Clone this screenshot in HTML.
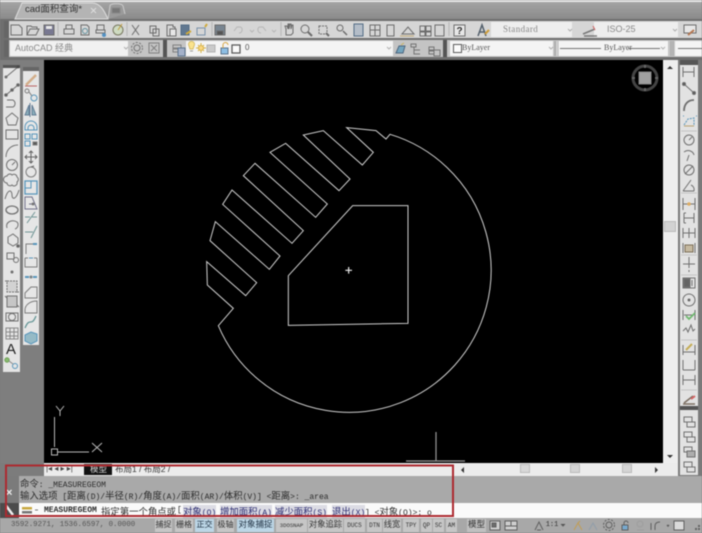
<!DOCTYPE html>
<html><head><meta charset="utf-8"><style>
html,body{margin:0;padding:0;width:702px;height:533px;overflow:hidden;background:#7c7c7c}
#r{position:absolute;left:0;top:0;width:702px;height:533px;overflow:hidden;filter:blur(.5px);background:#7c7c7c;font-family:"Liberation Sans","Noto Sans CJK SC",sans-serif}
.b{position:absolute}
.t{position:absolute;white-space:pre;line-height:12px;color:#333}
.m{font-family:"Liberation Mono","Noto Sans CJK SC",monospace;font-size:8px;color:#2c2c2c}
.m i{font-style:normal;font-size:9.4px;font-family:"Noto Sans CJK SC",sans-serif}
.s{font-family:"Liberation Mono","Noto Sans CJK SC",monospace;font-size:7px;color:#333;line-height:13px;top:519px;height:13px;text-align:center}
.k{background:#dcdce4;color:#2a2a70}
svg{position:absolute;left:0;top:0}
.ic{opacity:.72}
</style></head><body><div id="r">
<!-- chrome -->
<div class="b" style="left:0;top:0;width:702px;height:2px;background:#e8e8e8"></div>
<div class="b" style="left:0;top:2px;width:702px;height:17px;background:linear-gradient(#a4a4a4,#8a8a8a)"></div>
<div class="b" style="left:0;top:19px;width:702px;height:41px;background:#6f6f6f"></div>
<div class="b" style="left:4px;top:21px;width:698px;height:17px;background:#d6d6d6"></div>
<div class="b" style="left:4px;top:40px;width:698px;height:17px;background:#c4c4c4"></div>
<div class="b" style="left:10px;top:41px;width:118px;height:15px;background:#f1f1f1"></div>
<div class="b" style="left:186px;top:41px;width:207px;height:15px;background:#f4f4f4"></div>
<div class="b" style="left:450px;top:41px;width:103px;height:15px;background:#f4f4f4"></div>
<div class="b" style="left:557px;top:41px;width:111px;height:15px;background:#f4f4f4"></div>
<div class="b" style="left:675px;top:41px;width:27px;height:15px;background:#f4f4f4"></div>
<div class="b" style="left:491px;top:22px;width:81px;height:15px;background:#eee"></div>
<div class="b" style="left:594px;top:22px;width:84px;height:15px;background:#eee"></div>
<div class="b" style="left:163px;top:40px;width:4px;height:17px;background:#555"></div>
<div class="b" style="left:443px;top:40px;width:4px;height:17px;background:#555"></div>
<div class="b" style="left:4px;top:21px;width:5px;height:17px;background:#666"></div>
<div class="b" style="left:4px;top:40px;width:5px;height:17px;background:#666"></div>
<!-- canvas -->
<div class="b" style="left:44px;top:60px;width:619px;height:403px;background:#000"></div>
<!-- side panels -->
<div class="b" style="left:0;top:60px;width:44px;height:403px;background:#7e7e7e"></div>
<div class="b" style="left:3px;top:65px;width:17px;height:307px;background:#e4e4e4"></div>
<div class="b" style="left:3px;top:65px;width:17px;height:3px;background:#555"></div>
<div class="b" style="left:23px;top:67px;width:16px;height:278px;background:#e6e6e6"></div>
<div class="b" style="left:23px;top:67px;width:16px;height:4px;background:#666"></div>
<div class="b" style="left:663px;top:60px;width:15px;height:403px;background:#eee"></div>
<div class="b" style="left:678px;top:60px;width:24px;height:420px;background:#7a7a7a"></div>
<div class="b" style="left:680px;top:64px;width:18px;height:342px;background:#e2e2e2"></div>
<div class="b" style="left:680px;top:60px;width:18px;height:5px;background:#555"></div>
<div class="b" style="left:680px;top:409px;width:18px;height:66px;background:#e2e2e2"></div>
<div class="b" style="left:680px;top:406px;width:18px;height:4px;background:#555"></div>
<div class="b" style="left:664px;top:221px;width:12px;height:11px;background:#d2d2d2;border:1px solid #bbb;box-sizing:border-box"></div>
<!-- tab row & scrollbar -->
<div class="b" style="left:44px;top:463px;width:634px;height:13px;background:#ececec"></div>
<div class="b" style="left:520px;top:464px;width:10px;height:9px;background:#d8d8d8;border:1px solid #bbb;box-sizing:border-box"></div>
<div class="b" style="left:570px;top:464px;width:10px;height:9px;background:#d4d4d4;border:1px solid #bbb;box-sizing:border-box"></div>
<div class="b" style="left:622px;top:464px;width:10px;height:9px;background:#d4d4d4;border:1px solid #bbb;box-sizing:border-box"></div>
<div class="b" style="left:84px;top:464px;width:28px;height:11px;background:#111"></div>
<div class="t" style="left:46px;top:463px;font-size:8px;color:#444">|◂ ◂ ▸ ▸|</div>
<div class="t" style="left:90px;top:463px;font-size:8.5px;color:#ddd">模型</div>
<div class="t" style="left:115px;top:463px;font-size:8.5px;color:#333">布局1 / 布局2 /</div>
<!-- command area -->
<div class="b" style="left:0;top:476px;width:702px;height:27px;background:#a9a9a9"></div>
<div class="b" style="left:0;top:476px;width:19px;height:27px;background:#7b7b7b"></div>
<div class="b" style="left:0;top:503px;width:19px;height:15px;background:#4c4c4c"></div>
<div class="b" style="left:19px;top:503px;width:683px;height:15px;background:#fafafa"></div>
<div class="t" style="left:6px;top:487px;font-size:11px;font-weight:bold;color:#eee">×</div>
<div class="t m" style="left:20px;top:477px"><i>命令</i>: _MEASUREGEOM</div>
<div class="t m" style="left:20px;top:489px"><i>输入选项</i> [<i>距离</i>(D)/<i>半径</i>(R)/<i>角度</i>(A)/<i>面积</i>(AR)/<i>体积</i>(V)] &lt;<i>距离</i>&gt;: _area</div>
<div class="t m" style="left:44px;top:505px;font-weight:bold">MEASUREGEOM</div>
<div class="t m" style="left:101px;top:505px"><i>指定第一个角点或</i></div>
<div class="t m" style="left:177px;top:505px">[</div>
<div class="t m k" style="left:183px;top:505px"><i>对象</i>(O)</div>
<div class="t m k" style="left:220px;top:505px"><i>增加面积</i>(A)</div>
<div class="t m k" style="left:275px;top:505px"><i>减少面积</i>(S)</div>
<div class="t m k" style="left:332px;top:505px"><i>退出</i>(X)</div>
<div class="t m" style="left:365px;top:505px">] &lt;<i>对象</i>(O)&gt;: o</div>
<!-- status bar -->
<div class="b" style="left:0;top:518px;width:702px;height:15px;background:#a8a8a8"></div>
<div class="t s" style="left:11px;width:118px;color:#555;text-align:left;font-size:7.4px">3592.9271, 1536.6597, 0.0000</div>
<div class="t s" style="left:155px;width:17px;font-size:8px;background:#c6c6c6">捕捉</div>
<div class="t s" style="left:175px;width:18px;font-size:8px;background:#c6c6c6">栅格</div>
<div class="t s" style="left:195px;width:19px;font-size:8px;background:#bcd6e6;color:#234">正交</div>
<div class="t s" style="left:217px;width:17px;font-size:8px;background:#c6c6c6">极轴</div>
<div class="t s" style="left:237px;width:37px;font-size:8.5px;background:#bcd6e6;color:#234">对象捕捉</div>
<div class="t s" style="left:276px;width:31px;font-size:5.6px;background:#c6c6c6">3DOSNAP</div>
<div class="t s" style="left:308px;width:35px;font-size:8.3px;background:#c6c6c6">对象追踪</div>
<div class="t s" style="left:344px;width:21px;font-size:6px;background:#c6c6c6">DUCS</div>
<div class="t s" style="left:367px;width:15px;font-size:6px;background:#c6c6c6">DTN</div>
<div class="t s" style="left:383px;width:18px;font-size:8.3px;background:#c6c6c6">线宽</div>
<div class="t s" style="left:403px;width:16px;font-size:6px;background:#c6c6c6">TPY</div>
<div class="t s" style="left:421px;width:11px;font-size:6px;background:#c6c6c6">QP</div>
<div class="t s" style="left:433px;width:11px;font-size:6px;background:#c6c6c6">SC</div>
<div class="t s" style="left:446px;width:11px;font-size:6px;background:#c6c6c6">AM</div>
<div class="t s" style="left:467px;width:19px;font-size:8.5px;background:#c0c0c0">模型</div>
<div class="t s" style="left:543px;width:18px;font-size:7px">1:1</div>
<!-- toolbar text -->
<div class="t" style="left:15px;top:42px;font-size:9px;color:#888">AutoCAD 经典</div>
<div class="t" style="left:503px;top:23px;font-size:9px;color:#888;font-family:'Liberation Serif','Noto Sans CJK SC',serif;letter-spacing:.4px">Standard</div>
<div class="t" style="left:607px;top:23px;font-size:9px;color:#888">ISO-25</div>
<div class="t" style="left:245px;top:42px;font-size:8px;color:#555">0</div>
<div class="t" style="left:462px;top:42px;font-size:8px;color:#555;font-family:'Liberation Serif',serif">ByLayer</div>
<div class="t" style="left:604px;top:42px;font-size:8px;color:#555;font-family:'Liberation Serif',serif">ByLayer</div>
<svg width="702" height="533" viewBox="0 0 702 533" fill="none" stroke="#555" stroke-width="1">
<!-- tabs -->
<path d="M15 19L22 3H92C100 3 104 10 108 19Z" fill="#b4b4b4" stroke="#ddd"/>
<path d="M108 19L110 6C110 3 122 3 123 6L125 14" fill="#9a9a9a" stroke="#ccc"/>
<path d="M91 8l5 5M96 8l-5 5" stroke="#ddd"/>
<rect x="112" y="8" width="8" height="5" fill="#777" stroke="#888"/>
<!-- drawing -->
<g transform="translate(190 120) scale(.33333)" stroke="#cfcfcf" stroke-width="3">
<path d="M600 43L588 57L558 32L470 23L550 97L517 135L400 32L340 45L480 177L447 212L287 70L240 97L412 252L377 292L195 130L160 167L340 332L306 370L126 210L98 253L270 408L238 448L76 305L60 362L200 488L167 527L50 425L52 495L130 565L85 617A426 426 0 1 0 600 43Z"/>
<path d="M488 257H654V610L295 616V467Z"/>
<path d="M466 451H486M476 441V461" stroke-width="3.5" stroke="#eee"/>
</g>
<!-- viewcube -->
<circle cx="645" cy="78" r="12" stroke="#444" stroke-width="3"/>
<rect x="639" y="72" width="12" height="12" fill="#a0a0a0" stroke="#888"/>
<path d="M645 65v3M645 88v3M632 78h3M655 78h3" stroke="#666" stroke-width="2"/>
<!-- UCS -->
<g stroke="#b8b8b8">
<path d="M54.5 417V447M58 452H89"/>
<rect x="51.5" y="449" width="6" height="6"/>
<path d="M56 406L60 411L64 406M60 411V416M92 443L102 452M102 443L92 452"/>
</g>
<path d="M406 461H465M436 432V461" stroke="#999" stroke-width="1.2"/>
<!-- top row 1 icons -->
<g stroke="#444" class="ic">
<path d="M11 25h8l3 3v7H11Z"/>
<path d="M27 35v-9h4l1 1h5v2M27 35l3-6h9l-3 6Z"/>
<path d="M44 25h10v10H44Z" fill="#557" /><rect x="46" y="26" width="6" height="3" fill="#eee" stroke="none"/>
<path d="M58 22v14" stroke="#aaa"/>
<path d="M64 29h10v5H64ZM66 29v-4h6v4" />
<path d="M81 25h6l2 2v8H81Z"/><circle cx="85" cy="31" r="2.500" stroke="#378"/>
<path d="M97 25h7v5H97ZM96 30h9v3h-9Z"/><circle cx="104" cy="35" r="2" fill="#27b" stroke="none"/>
<circle cx="118" cy="30" r="5" fill="#cdb" stroke="#553"/><path d="M118 30l4-6" stroke="#b80"/>
<path d="M127 22v14" stroke="#aaa"/>
<path d="M132 25l7 10M139 25l-7 10"/>
<path d="M150 26h6v7h-6ZM153 29h6v7h-6Z" />
<path d="M167 25h6v2h2v9h-8Z" /><rect x="170" y="29" width="6" height="7" fill="#eee"/>
<rect x="181" y="25" width="8" height="10" fill="#357" stroke="#246"/><path d="M186 34l5-3" stroke="#c90" stroke-width="2"/>
<path d="M197 28h8v7h-8Z" stroke="#579"/><path d="M205 27l2-3" stroke="#c90" stroke-width="2"/>
<path d="M212 22v14" stroke="#aaa"/>
<rect x="215" y="25" width="10" height="10" fill="#567"/><rect x="217" y="31" width="6" height="4" fill="#222"/>
<g stroke="#aaa"><path d="M234 31l3-4h3c3 0 3 6-1 6"/><path d="M250 30l2 2 2-2" /><path d="M266 31l-3-4h-3c-3 0-3 6 1 6"/><path d="M272 30l2 2 2-2"/></g>
<path d="M281 22v14" stroke="#aaa"/>
<path d="M286 35v-6l-1-3 2 0 1 3v-5h1v5l1-5h1v5l1-4h1v8l-2 2Z"/>
<circle cx="305" cy="29" r="4"/><path d="M308 32l4 4" stroke-width="2"/>
<path d="M319 26h8v8h-8Z" stroke-dasharray="2 1"/><path d="M326 33l3 3" stroke-width="2"/>
<circle cx="340" cy="28" r="3"/><path d="M343 31l4 4" stroke-width="1.500"/>
<rect x="354" y="24" width="9" height="12" fill="#a8b4c4" stroke="#246"/>
<path d="M370 25h10v11h-10ZM375 25v11M370 30h10"/>
<path d="M387 25h7v11h-7Z"/>
<path d="M402 34l6-7 6 7Z" /><path d="M400 36h14" stroke="#b95"/>
<path d="M420 26h5v5h-5ZM426 26h5v5h-5ZM420 32h5v4h-5ZM426 32h5v4h-5Z"/>
<path d="M435 25h9v11h-9Z"/>
<path d="M449 22v14" stroke="#aaa"/>
<rect x="454" y="25" width="11" height="11" fill="#eee"/>
<path d="M478 36l4-11 4 11M480 32h4" stroke="#234" stroke-width="1.500"/><path d="M485 34l4-4" stroke="#c80" stroke-width="2"/>
<path d="M568 29l2 2 2-2M673 29l2 2 2-2" stroke="#999"/>
<path d="M583 34l12-5M584 36h13" stroke="#555" stroke-width="1.500"/><path d="M593 26l2 4" stroke="#c33"/>
<rect x="684" y="25" width="12" height="8" fill="#eee"/><path d="M688 35l6-5" stroke="#a52" stroke-width="2"/>
</g>
<text x="456.500" y="34" font-family="Liberation Sans" font-size="10" font-weight="bold" fill="#333" stroke="none">?</text>
<!-- row 2 icons -->
<g stroke="#555" class="ic">
<path d="M124 47l2 2 2-2M387 47l2 2 2-2M549 47l2 2 2-2M661 47l2 2 2-2" stroke="#999"/>
<circle cx="137" cy="48" r="3"/><circle cx="137" cy="48" r="5.500" stroke-dasharray="2 1.500"/>
<path d="M149 43h10v10h-10ZM151 45l6 6M157 45l-6 6" stroke="#666"/>
<path d="M173 45h8v3h-8ZM173 49h8v3h-8Z" stroke="#666"/><rect x="178" y="48" width="7" height="8" fill="#9ac" stroke="#357"/>
<path d="M189 46a3 3 0 1 1 5 0l-1 3h-3Z" fill="#fd6" stroke="#ca3"/><path d="M190 51h3" stroke="#777"/>
<circle cx="201" cy="48" r="2.500" fill="#fc5" stroke="#c90"/><path d="M201 43v2M201 51v2M196 48h2M204 48h2M198 45l1 1M204 45l-1 1M198 51l1-1M204 51l-1-1" stroke="#c90"/>
<rect x="207" y="45" width="8" height="7" fill="#bbb" stroke="#999"/>
<rect x="221" y="48" width="7" height="6" fill="#6ad" stroke="#246"/><path d="M223 48v-3a2.500 2.500 0 0 1 5 0" stroke="#c80"/>
<rect x="232" y="45" width="8" height="8" fill="#fff" stroke="#222" stroke-width="1.300"/>
<path d="M396 53l3-7h6l-2 7Z" fill="#59b" stroke="#246"/><path d="M401 45l3-2" stroke="#ca3"/>
<path d="M411 44h5v3h-5ZM414 47v7h6M414 50h6" stroke="#555"/>
<path d="M429 47h5v3h-5ZM429 51h5v3h-5ZM434 50h6v6h-6Z" stroke="#555"/>
<rect x="453.500" y="44.500" width="8" height="8" fill="#fff" stroke="#222"/>
<path d="M560 48.500H601M628 48.500H660" stroke="#444"/>
<path d="M678 48.500H702" stroke="#444"/>
<path d="M555 41v15M558 41v15M671 41v15M673 41v15" stroke="#999"/>
</g>
<!-- left toolbar 1 -->
<g stroke="#444" class="ic">
<path d="M6 77L18 67"/><circle cx="6" cy="77" r="1" fill="#444"/><circle cx="18" cy="67" r="1" fill="#444"/>
<path d="M6 95L18 85"/><circle cx="6" cy="95" r="1.300" fill="#222"/><circle cx="12" cy="90" r="1.300" fill="#222"/><circle cx="18" cy="85" r="1.300" fill="#222"/>
<path d="M6 107H13A4 4 0 0 0 13 100H10" /><path d="M7 100H11"/>
<path d="M12 113L18 118L16 125H8L6 118Z"/>
<rect x="6" y="130" width="12" height="9"/>
<path d="M6 157C6 149 12 145 18 145"/>
<circle cx="12" cy="165" r="5.500"/><path d="M12 165l3-3"/>
<path d="M7 176a3 3 0 0 1 5-1a3 3 0 0 1 5 2a3 3 0 0 1 0 5a3 3 0 0 1-5 3a3 3 0 0 1-5-2a3 3 0 0 1 0-7Z"/>
<path d="M5 199C8 188 12 190 12 195S16 200 19 190"/>
<ellipse cx="12" cy="210" rx="6" ry="4" stroke-width="1.300"/>
<path d="M7 228C5 222 12 219 17 222C19 224 18 228 15 229"/>
<path d="M8 237l5-3 5 4v5l-5 3-5-3ZM18 246l1 1" /><circle cx="18" cy="246" r="1.300" fill="#222"/>
<path d="M7 253h7v6H7Z"/><circle cx="16" cy="260" r="2.500"/>
<circle cx="12" cy="272" r="1" fill="#444"/>
<path d="M7 281h10v11H7Z" fill="#ccc" stroke-dasharray="2 1"/><path d="M5 281h2M17 292h2"/>
<path d="M7 296h10v11H7Z" fill="#bbb"/><path d="M5 296l2 2M19 307l-2-2"/>
<path d="M6 321v-8h12v8Z"/><circle cx="12" cy="317" r="3.500"/>
<path d="M6 328h12v11H6ZM6 332h12M6 336h12M10 328v11M14 328v11" stroke="#666"/>
<circle cx="7" cy="360" r="2.200" fill="#6a4" stroke="#482"/><circle cx="15" cy="366" r="2.500" stroke="#27a"/><path d="M9 361l4 3" stroke="#666"/>
</g>
<text x="6" y="354" font-family="Liberation Sans" font-size="15" fill="#222" stroke="none">A</text>
<!-- left toolbar 2 -->
<g stroke="#555" class="ic">
<path d="M26 85L36 75" stroke="#c96" stroke-width="2.500"/><path d="M25 86h12" stroke="#a33"/>
<circle cx="27" cy="91" r="2"/><circle cx="34" cy="98" r="3" stroke="#27a"/><path d="M29 92l3 4"/>
<path d="M30 103v14M29 105l-4 10h4ZM32 105l4 10h-4Z" stroke="#357" fill="#69a"/>
<path d="M25 130v-3a6 6 0 0 1 12 0v3ZM28 130v-2a3 3 0 0 1 6 0v2" stroke="#27a"/>
<path d="M25 134h5v5h-5ZM32 134h5v5h-5ZM25 141h5v5h-5Z" stroke="#27a"/><rect x="33" y="142" width="4" height="3" fill="#222"/>
<path d="M31 151v12M25 157h12M29 153l2-2 2 2M29 161l2 2 2-2M27 155l-2 2 2 2M35 155l2 2-2 2" stroke="#333"/>
<circle cx="31" cy="172" r="5"/><path d="M31 167l3-1" stroke="#333"/>
<path d="M25 181h12v13H25Z" stroke="#27a" stroke-width="1.300"/><path d="M25 188h6v-7" stroke="#27a"/>
<path d="M25 209v-12h7l5 12ZM29 204h4" stroke="#446"/><circle cx="33" cy="204" r="1" fill="#222"/>
<path d="M27 223L35 212M25 217h5M32 217h5" stroke="#477"/>
<path d="M25 232h8M37 226L31 238" stroke="#477"/>
<path d="M26 254v-10h11" /><path d="M33 244h4" stroke="#27a" stroke-width="2"/>
<path d="M25 258v9h12v-9M25 258h3M34 258h3" /><path d="M29 258h4" stroke="#27a"/>
<path d="M25 277h4M33 277h4" stroke="#27a" stroke-width="2"/><circle cx="31" cy="277" r="1" fill="#27a"/>
<path d="M25 298v-5l6-6h6v11Z"/>
<path d="M25 313v-3c0-5 5-9 12-9v12Z"/>
<path d="M25 328C30 316 31 328 36 316" stroke="#377" stroke-width="1.300"/>
<path d="M25 335l6-3 6 2v7l-6 3-6-3Z" fill="#7ab" stroke="#27a"/>
</g>
<!-- right toolbar 1 -->
<g stroke="#444" class="ic">
<path d="M683 67v10M694 67v10M683 72h11"/>
<path d="M684 84L694 93"/><circle cx="684" cy="84" r="1.500" fill="#222"/><circle cx="694" cy="93" r="1.500" fill="#222"/>
<path d="M684 111C684 104 688 100 694 100" stroke-width="1.800"/>
<path d="M684 125l4-6 6-1v8M683 116h1M696 116h1" stroke="#27a" stroke-dasharray="2 1"/><path d="M684 126h10" stroke="#a84"/>
<path d="M681 131h16M681 193h16M681 255h16M681 275h16M681 340h16M681 390h16" stroke="#bbb"/>
<circle cx="689" cy="140" r="5"/><path d="M689 140l3-3"/>
<path d="M684 152c4-3 9-1 10 3M689 155l-2 6" />
<circle cx="689" cy="170" r="5"/><path d="M685 174l8-8"/>
<path d="M683 191L691 180M683 191h11M691 185a5 5 0 0 1 3 6"/>
<path d="M683 198v12M695 198v12M683 204h12"/><circle cx="689" cy="204" r="1.800" fill="#d93" stroke="none"/>
<path d="M684 213v10M694 213v10M684 218h10M684 213h2M684 223h2"/>
<path d="M683 228v10M689 228v10M695 228v10M683 233h12"/>
<path d="M683 243v10M695 243v10"/><rect x="685" y="245" width="8" height="7" fill="#ba8" stroke="#542"/>
<path d="M689 257v11M683 264h12M689 270v2"/>
<path d="M683 278h12v10h-12Z"/><rect x="684" y="279" width="6" height="8" fill="#333"/><path d="M692 280v6"/>
<circle cx="689" cy="300" r="6"/><circle cx="689" cy="300" r="1" fill="#222"/>
<path d="M683 310v10M695 310v10M684 315h10"/><path d="M686 316l3 3 6-6" stroke="#4a4" stroke-width="1.800"/>
<path d="M683 331l3-3 2 4 3-7 2 6 2-2"/>
<path d="M683 345v10M695 345v10M683 352h12"/><path d="M686 350l6-6" stroke="#b92" stroke-width="2"/>
<path d="M683 360v10M695 360v10M683 370h12"/>
<path d="M683 375v10M695 375v10M683 380h12"/>
<path d="M684 403l9-7M683 404h12" stroke="#543" stroke-width="1.500"/><path d="M691 399l4-3" stroke="#c33" stroke-width="2"/>
<path d="M684 417h8v5h-8ZM687 422h8v5h-8Z"/>
<path d="M684 432h8v5h-8ZM687 437h8v5h-8Z"/>
<path d="M684 447h8v5h-8Z"/><rect x="687" y="451" width="8" height="6" fill="#999"/>
<path d="M684 462h8v5h-8ZM687 467h8v5h-8Z"/>
</g>
<!-- scrollbars arrows -->
<path d="M670 66l-3 3h6ZM670 458l-3-3h6ZM461 470l3-3v6ZM658 470l-3-3v6Z" fill="#333" stroke="none"/>
<!-- cmd icons -->
<path d="M7 507l6 8" stroke="#eee" stroke-width="2.500"/><path d="M6 505l2 3" stroke="#eee" stroke-width="2"/>
<rect x="22" y="507" width="10" height="2.500" fill="#c8a840" stroke="none"/><rect x="22" y="511" width="10" height="2.500" fill="#777" stroke="none"/>
<path d="M35 510h3" stroke="#777"/>
<!-- status icons -->
<g stroke="#444" class="ic">
<rect x="490" y="521" width="10" height="9" fill="#ddd"/><path d="M492 523h4v4h-4Z" fill="#555"/>
<rect x="505" y="521" width="12" height="9" fill="#ddd"/><path d="M511 521v5M505 526h12"/>
<path d="M535 530l4-8 4 8M537 530h4"/>
<path d="M561 524l2 2 2-2" fill="#222"/>
<path d="M574 530l4-7 4 7M578 523l2-2" stroke="#c93"/><path d="M589 530l4-7 4 7" stroke="#89a"/>
<circle cx="609" cy="525" r="3"/><circle cx="609" cy="525" r="5.500" stroke-dasharray="2 1.500"/>
<rect x="622" y="525" width="6" height="5" fill="#6ad"/><path d="M624 525v-2a2 2 0 0 1 4 0"/>
<circle cx="640" cy="524" r="3" stroke="#999"/><path d="M637 530h7" stroke="#999"/>
<path d="M651 530v-7M655 530v-4c0-3 2-4 5-4"/>
<path d="M667 525l1 1 1-1" fill="#222" stroke-width="1.500"/>
<rect x="674" y="521" width="10" height="9" fill="#eee"/>
<circle cx="696" cy="529" r=".6"/><circle cx="699" cy="529" r=".6"/><circle cx="699" cy="526" r=".6"/>
</g>
<!-- red box -->
<rect x="6" y="465.500" width="447" height="50.500" stroke="#ad2a30" stroke-width="2"/>
</svg>
<div class="t" style="left:25px;top:4px;font-size:9.5px;color:#333">cad面积查询*</div>
</div></body></html>
